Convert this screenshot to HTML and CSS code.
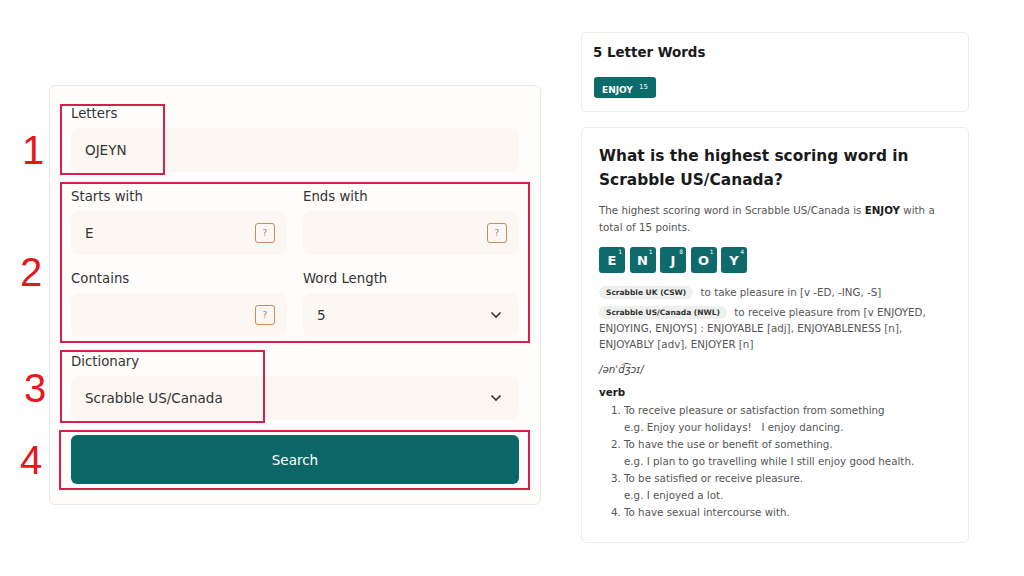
FILE: index.html
```html
<!DOCTYPE html>
<html lang="en">
<head>
    <meta charset="UTF-8">
    <title>Word Finder</title>
    <link rel="stylesheet" href="styles.css">
</head>
<body>
    <div class="page">
        <div class="search-card">
            <div class="field">
                <label>Letters</label>
                <div class="input">OJEYN</div>
                <div class="mark mark-1"><span class="num">1</span></div>
            </div>
            <div class="grid">
                <div class="field">
                    <label>Starts with</label>
                    <div class="input">E <span class="help">?</span></div>
                </div>
                <div class="field">
                    <label>Ends with</label>
                    <div class="input"><span></span> <span class="help">?</span></div>
                </div>
                <div class="field">
                    <label>Contains</label>
                    <div class="input"><span></span> <span class="help">?</span></div>
                </div>
                <div class="field">
                    <label>Word Length</label>
                    <div class="input">5
                        <svg class="chev" width="12" height="8" viewBox="0 0 12 8"><polyline points="1.5,1.5 6,6 10.5,1.5" fill="none" stroke="#333" stroke-width="1.6"/></svg>
                    </div>
                </div>
                <div class="mark mark-2"><span class="num">2</span></div>
            </div>
            <div class="field">
                <label>Dictionary</label>
                <div class="input">Scrabble US/Canada
                    <svg class="chev" width="12" height="8" viewBox="0 0 12 8"><polyline points="1.5,1.5 6,6 10.5,1.5" fill="none" stroke="#333" stroke-width="1.6"/></svg>
                </div>
                <div class="mark mark-3"><span class="num">3</span></div>
            </div>
            <div class="field">
                <button class="search-btn">Search</button>
                <div class="mark mark-4"><span class="num">4</span></div>
            </div>
        </div>

        <div class="side">
            <div class="card words">
                <h3>5 Letter Words</h3>
                <span class="badge">ENJOY <sup>15</sup></span>
            </div>
            <div class="card answer">
                <h2>What is the highest scoring word in Scrabble US/Canada?</h2>
                <p class="lead">The highest scoring word in Scrabble US/Canada is <b>ENJOY</b> with a total of 15 points.</p>
                <div class="tiles">
                    <span class="tile">E<i>1</i></span>
                    <span class="tile">N<i>1</i></span>
                    <span class="tile">J<i>8</i></span>
                    <span class="tile">O<i>1</i></span>
                    <span class="tile">Y<i>4</i></span>
                </div>
                <p class="def"><span class="tag">Scrabble UK (CSW)</span> to take pleasure in [v -ED, -ING, -S]</p>
                <p class="def"><span class="tag">Scrabble US/Canada (NWL)</span> to receive pleasure from [v ENJOYED, ENJOYING, ENJOYS] : ENJOYABLE [adj], ENJOYABLENESS [n], ENJOYABLY [adv], ENJOYER [n]</p>
                <p class="ipa">/ənˈd͡ʒɔɪ/</p>
                <p class="pos">verb</p>
                <ol class="senses">
                    <li>To receive pleasure or satisfaction from something<span class="eg">e.g. Enjoy your holidays! &nbsp; I enjoy dancing.</span></li>
                    <li>To have the use or benefit of something.<span class="eg">e.g. I plan to go travelling while I still enjoy good health.</span></li>
                    <li>To be satisfied or receive pleasure.<span class="eg">e.g. I enjoyed a lot.</span></li>
                    <li>To have sexual intercourse with.</li>
                </ol>
            </div>
        </div>
    </div>
</body>
</html>
```

FILE: styles.css
```css
body {
    margin: 0;
    font-family: "DejaVu Sans", sans-serif;
    background: #fff;
    color: #333;
}
.page {
    display: flex;
    align-items: flex-start;
    gap: 40px;
    padding: 32px 0 0 49px;
}

/* search form */
.search-card {
    width: 492px;
    box-sizing: border-box;
    margin-top: 53px;
    padding: 19px 21px 20px;
    border: 1px solid #ebe9e7;
    border-radius: 6px;
    background: #fefdfc;
    display: flex;
    flex-direction: column;
    gap: 15.5px;
}
.field { position: relative; display: flex; flex-direction: column; }
.field label { font-size: 13.3px; line-height: 18px; margin-bottom: 5px; color: #333; }
.input {
    height: 44px;
    box-sizing: border-box;
    border-radius: 8px;
    background: #fcf7f2;
    display: flex;
    align-items: center;
    justify-content: space-between;
    padding: 0 12px 0 14px;
    font-size: 13.5px;
    color: #333;
}
.grid {
    position: relative;
    display: grid;
    grid-template-columns: 1fr 1fr;
    column-gap: 16px;
    row-gap: 15.5px;
}
.help {
    width: 20px;
    height: 20px;
    box-sizing: border-box;
    border: 1.5px solid #c98a5e;
    border-radius: 3px;
    font-size: 9px;
    color: #a08070;
    display: flex;
    align-items: center;
    justify-content: center;
}
.chev { margin-right: 5px; }
.search-btn {
    height: 49px;
    border: 0;
    border-radius: 6px;
    background: #0b6668;
    color: #fff;
    font-family: inherit;
    font-size: 13.5px;
}

/* red annotation boxes */
.mark { position: absolute; box-sizing: border-box; border: 2px solid #d81f4a; }
.mark-1 { left: -11px; top: -1px; width: 105px; height: 71px; }
.mark-2 { left: -11px; top: -5.5px; right: -11px; bottom: -6px; }
.mark-3 { left: -11px; top: -2.5px; width: 205px; height: 73px; }
.mark-4 { left: -12px; top: -5px; right: -11px; bottom: -6px; }
.num {
    position: absolute;
    left: -40px;
    width: 22px;
    text-align: center;
    font-family: "Liberation Sans", sans-serif;
    font-size: 40px;
    line-height: 40px;
    color: #e5161d;
}
.mark-1 .num { top: 24px; }
.mark-2 .num { top: 68px; left: -42px; }
.mark-3 .num { top: 16px; left: -38px; }
.mark-4 .num { top: 8px; left: -41px; }

/* right column */
.side { width: 388px; display: flex; flex-direction: column; gap: 15px; }
.card {
    border: 1px solid #ececec;
    border-radius: 6px;
    background: #fff;
}
.words { padding: 10px 11px 13px; }
.words h3 { margin: 0 0 14px; font-size: 13.4px; line-height: 20px; color: #1a1a1a; }
.badge {
    display: inline-block;
    margin-left: 1px;
    padding: 0 8px;
    height: 21px;
    line-height: 21px;
    border-radius: 3px;
    background: #0e6b6b;
    color: #fff;
    font-size: 9px;
    font-weight: bold;
}
.badge sup { font-size: 7px; font-weight: normal; vertical-align: 4px; margin-left: 3px; }

.answer { padding: 16px 17px 21px; }
.answer h2 { margin: 0; font-size: 15.4px; line-height: 24px; color: #1a1a1a; }
.answer p { margin: 0; }
.lead { margin-top: 9.5px !important; font-size: 10.3px; line-height: 17px; color: #555; }
.lead b { color: #1a1a1a; }
.tiles { display: flex; gap: 4.5px; margin-top: 11.5px; }
.tile {
    position: relative;
    width: 26px;
    height: 26px;
    border-radius: 3px;
    background: #0f6b6b;
    color: #fff;
    font-size: 13px;
    font-weight: bold;
    display: flex;
    align-items: center;
    justify-content: center;
}
.tile i {
    position: absolute;
    top: 1px;
    right: 3px;
    font-size: 6px;
    font-style: normal;
    font-weight: normal;
}
.def { font-size: 10.3px; line-height: 16px; color: #555; margin-top: 11px !important; }
.def + .def { margin-top: 4px !important; }
.tag {
    display: inline-block;
    padding: 0 7px;
    margin-right: 4px;
    line-height: 13px;
    vertical-align: 1px;
    border-radius: 8px;
    background: #eef0ee;
    color: #333;
    font-size: 7.5px;
    font-weight: bold;
}
.ipa { margin-top: 9px !important; font-size: 10.3px; line-height: 16px; font-style: italic; color: #444; }
.pos { margin-top: 7px !important; font-size: 10.3px; line-height: 16px; font-weight: bold; color: #1a1a1a; }
.senses {
    margin: 1.5px 0 0;
    padding-left: 25px;
    font-size: 10.3px;
    line-height: 17px;
    color: #555;
}
.eg { display: block; }
```
